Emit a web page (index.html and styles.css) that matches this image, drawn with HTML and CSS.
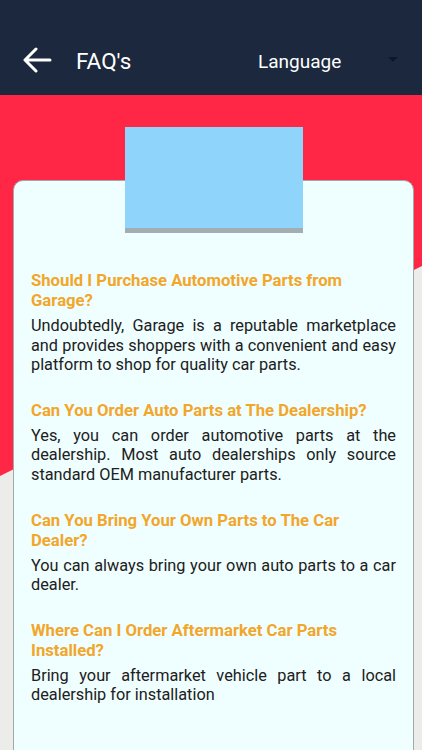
FILE: index.html
```html
<!DOCTYPE html>
<html>
<head>
<title>FAQ's</title>
<meta charset="utf-8"/>
<link rel="stylesheet" href="styles.css">
</head>
<body>

<div id="topbar">
  <a class="back" href="javascript:;">
    <svg width="30" height="26" viewBox="0 0 30 26"><path d="M28 13H3M14 2L3 13l11 11" fill="none" stroke="#fff" stroke-width="3" stroke-linecap="round" stroke-linejoin="round"/></svg>
  </a>
  <h1>FAQ's</h1>
  <div class="lang">Language <span class="caret"></span></div>
</div>

<div id="main">
  <div class="card">
    <div class="banner"></div>

    <div class="faq">
      <h2>Should I Purchase Automotive Parts from Garage?</h2>
      <p>Undoubtedly, Garage is a reputable marketplace and provides shoppers with a convenient and easy platform to shop for quality car parts.</p>
    </div>
    <div class="faq">
      <h2>Can You Order Auto Parts at The Dealership?</h2>
      <p>Yes, you can order automotive parts at the dealership. Most auto dealerships only source standard OEM manufacturer parts.</p>
    </div>
    <div class="faq">
      <h2>Can You Bring Your Own Parts to The Car Dealer?</h2>
      <p>You can always bring your own auto parts to a car dealer.</p>
    </div>
    <div class="faq">
      <h2>Where Can I Order Aftermarket Car Parts Installed?</h2>
      <p>Bring your aftermarket vehicle part to a local dealership for installation</p>
    </div>
  </div>
</div>

</body>
</html>
```

FILE: styles.css
```css
html, body { margin:0; padding:0; }
body {
    font-family: Roboto, "Noto Sans", Arial, sans-serif;
    width:422px;
    height:750px;
    overflow:hidden;
    background:#ececea;
}

#topbar {
    height:95px;
    background:#1b283d;
    color:#fff;
    display:flex;
    align-items:center;
    padding:27px 0 0 22px;
    box-sizing:border-box;
}
#topbar .back { display:flex; width:30px; margin-top:-2px; }
#topbar h1 { margin:0 0 0 24px; font-size:22.5px; font-weight:400; width:182px; }
.lang { display:flex; align-items:center; font-size:19px; }
.caret {
    display:inline-block;
    margin-left:47px;
    margin-top:-3px;
    width:0; height:0;
    border-left:5px solid transparent;
    border-right:5px solid transparent;
    border-top:5px solid #0e1826;
}

#main {
    position:relative;
    height:655px;
    padding:85px 8px 0 13px;
    box-sizing:border-box;
}
/* red backdrop, cut on a slant */
#main:before {
    content:"";
    position:absolute;
    left:0; top:0; right:0; bottom:0;
    background:#ff2745;
    clip-path:polygon(0 0, 100% 0, 100% 171px, 0 381px);
}

.card {
    position:relative;
    background:#effeff;
    border:1px solid #a3a8aa;
    border-radius:10px;
    height:620px;
    padding:0 17px;
}
.banner {
    width:178px;
    height:101px;
    margin:-54px auto 0;
    background:#8fd5fb;
    border-bottom:5px solid #a3aeb3;
}

.faq { margin-top:26px; }
.banner + .faq { margin-top:38px; }
.faq h2 {
    margin:0;
    color:#f2a62a;
    font-size:16.7px;
    font-weight:700;
    line-height:20px;
}
.faq p {
    margin:5px 0 0;
    color:#202020;
    font-size:16.3px;
    line-height:19.6px;
    text-align:justify;
}
```
